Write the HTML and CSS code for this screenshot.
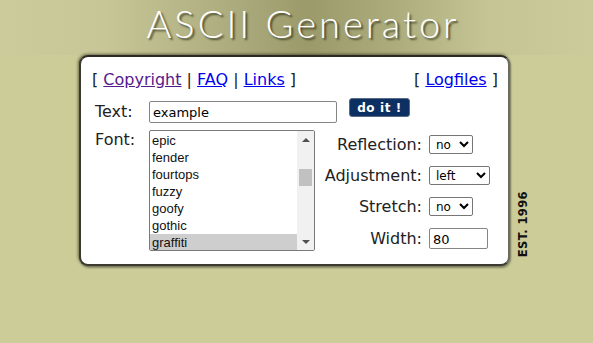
FILE: index.html
```html
<!DOCTYPE html>
<html>
<head>
<meta charset="utf-8">
<title>ASCII Generator</title>
<link rel="stylesheet" href="styles.css">
</head>
<body>
<header class="masthead">
  <h1 class="title">ASCII Generator</h1>
</header>
<div class="stage">
  <form class="card">
    <div class="nav">
      <span>[ <a class="visited" href="#">Copyright</a> | <a href="#">FAQ</a> | <a href="#">Links</a> ]</span>
      <span>[ <a href="#">Logfiles</a> ]</span>
    </div>
    <div class="row-text">
      <label class="lbl">Text:</label>
      <input class="text-input" type="text" value="example">
      <button class="go" type="button">do it !</button>
    </div>
    <div class="row-font">
      <label class="lbl">Font:</label>
      <div class="listbox">
        <div class="items">
          <div class="item">epic</div>
          <div class="item">fender</div>
          <div class="item">fourtops</div>
          <div class="item">fuzzy</div>
          <div class="item">goofy</div>
          <div class="item">gothic</div>
          <div class="item sel">graffiti</div>
        </div>
        <div class="sbar">
          <span class="arr up"></span>
          <span class="track"><span class="thumb"></span></span>
          <span class="arr down"></span>
        </div>
      </div>
      <div class="opts">
        <label class="olbl">Reflection:</label>
        <select class="sel-s"><option>no</option></select>
        <label class="olbl">Adjustment:</label>
        <select class="sel-l"><option>left</option></select>
        <label class="olbl">Stretch:</label>
        <select class="sel-s"><option>no</option></select>
        <label class="olbl">Width:</label>
        <input class="width-input" type="text" value="80">
      </div>
    </div>
  </form>
  <div class="est">EST. 1996</div>
</div>
</body>
</html>
```
FILE: styles.css
```css
html, body {
  margin: 0;
  padding: 0;
}
body {
  background: #cccc99;
  font-family: "DejaVu Sans", Verdana, sans-serif;
  color: #000;
  height: 343px;
  overflow: hidden;
}
.masthead {
  height: 55px;
  background: linear-gradient(to right, #cbcb9c 0%, #c6c697 18%, #adad7f 38%, #9a9a6b 52%, #abab7c 66%, #c4c495 82%, #cbcb9c 100%);
  display: flex;
  justify-content: center;
}
.title {
  margin: 0;
  padding-left: 13px;
  font-family: "Lato", sans-serif;
  font-weight: 300;
  font-size: 38px;
  letter-spacing: 3px;
  line-height: 1;
  color: #fff;
  padding-top: 4px;
  text-shadow: 2px 2px 2px rgba(40, 40, 20, 0.75);
}
.stage {
  display: flex;
  padding-left: 79px;
}
.card {
  width: 406px;
  height: 207px;
  background: #fff;
  border: 2px solid #3a3a30;
  border-top-color: #2a2a22;
  border-right-color: #6b6b66;
  border-radius: 9px;
  box-shadow: -1px -1px 3px rgba(40, 40, 20, 0.6), 1px 2px 2px rgba(0, 0, 0, 0.35);
  padding: 0 10px 0 11px;
  box-sizing: content-box;
  margin: 0;
  font-size: 16px;
}
.nav {
  display: flex;
  justify-content: space-between;
  padding-top: 13px;
  height: 24px;
  line-height: 20px;
  color: #222;
}
a {
  color: #0000ee;
  text-decoration: underline;
}
a.visited {
  color: #551a8b;
}
.row-text {
  display: flex;
  align-items: flex-start;
  margin-top: 7px;
}
.lbl {
  width: 57px;
  padding-left: 3px;
  box-sizing: border-box;
  font-size: 16px;
  line-height: 20px;
  color: #222;
}
.row-text .lbl {
  padding-top: 1px;
}
.text-input {
  width: 188px;
  height: 22px;
  box-sizing: border-box;
  border: 1px solid #858585;
  border-radius: 2px;
  font-family: "DejaVu Sans", sans-serif;
  font-size: 13px;
  padding: 1px 3px 0;
  margin: 0;
}
.go {
  margin: -3px 0 0 12px;
  width: 61px;
  height: 19px;
  padding: 0;
  background: #0d3062;
  color: #fff;
  border: 1px solid #5a6a86;
  border-radius: 3px;
  font-family: "DejaVu Sans", sans-serif;
  font-weight: bold;
  font-size: 12px;
  letter-spacing: 0.6px;
  line-height: 16px;
}
.row-font {
  display: flex;
  align-items: flex-start;
  margin-top: 7px;
}
.listbox {
  width: 166px;
  height: 121px;
  box-sizing: border-box;
  border: 1px solid #7a7a7a;
  border-radius: 2px;
  display: flex;
  overflow: hidden;
}
.items {
  flex: 1;
  padding-top: 1px;
}
.item {
  height: 17px;
  line-height: 17px;
  font-family: "Liberation Sans", Arial, sans-serif;
  font-size: 13px;
  padding-left: 2px;
  color: #111;
}
.item.sel {
  background: #cecece;
}
.sbar {
  width: 17px;
  background: #f1f1f1;
  display: flex;
  flex-direction: column;
  align-items: center;
}
.arr {
  width: 0;
  height: 0;
  border-left: 4px solid transparent;
  border-right: 4px solid transparent;
}
.arr.up {
  margin-top: 7px;
  border-bottom: 4px solid #505050;
}
.arr.down {
  margin-bottom: 6px;
  border-top: 4px solid #505050;
}
.track {
  flex: 1;
  width: 100%;
  padding-top: 27px;
  box-sizing: border-box;
  display: flex;
  justify-content: center;
}
.thumb {
  width: 13px;
  height: 17px;
  background: #c1c1c1;
}
.opts {
  display: grid;
  grid-template-columns: 102px auto;
  column-gap: 7px;
  row-gap: 12px;
  align-items: center;
  margin-left: 5px;
  margin-top: 5px;
}
.olbl {
  text-align: right;
  font-size: 16px;
  line-height: 19px;
  color: #222;
  white-space: nowrap;
}
select {
  height: 19px;
  box-sizing: border-box;
  border: 1px solid #767676;
  border-radius: 2px;
  background: #fff;
  font-family: "DejaVu Sans", sans-serif;
  font-size: 12px;
  padding: 0 0 0 2px;
  margin: 0;
  color: #000;
}
.sel-s {
  width: 44px;
}
.sel-l {
  width: 61px;
}
.width-input {
  width: 59px;
  height: 21px;
  box-sizing: border-box;
  border: 1px solid #858585;
  border-radius: 2px;
  font-family: "DejaVu Sans", sans-serif;
  font-size: 13px;
  padding: 1px 3px 0;
  margin: 0;
}
.est {
  writing-mode: vertical-rl;
  transform: rotate(180deg);
  font-family: "DejaVu Sans", sans-serif;
  font-weight: bold;
  font-size: 11.5px;
  letter-spacing: 0.4px;
  align-self: flex-end;
  margin: 0 0 9px 8px;
  line-height: 11px;
  color: #111;
}
```
